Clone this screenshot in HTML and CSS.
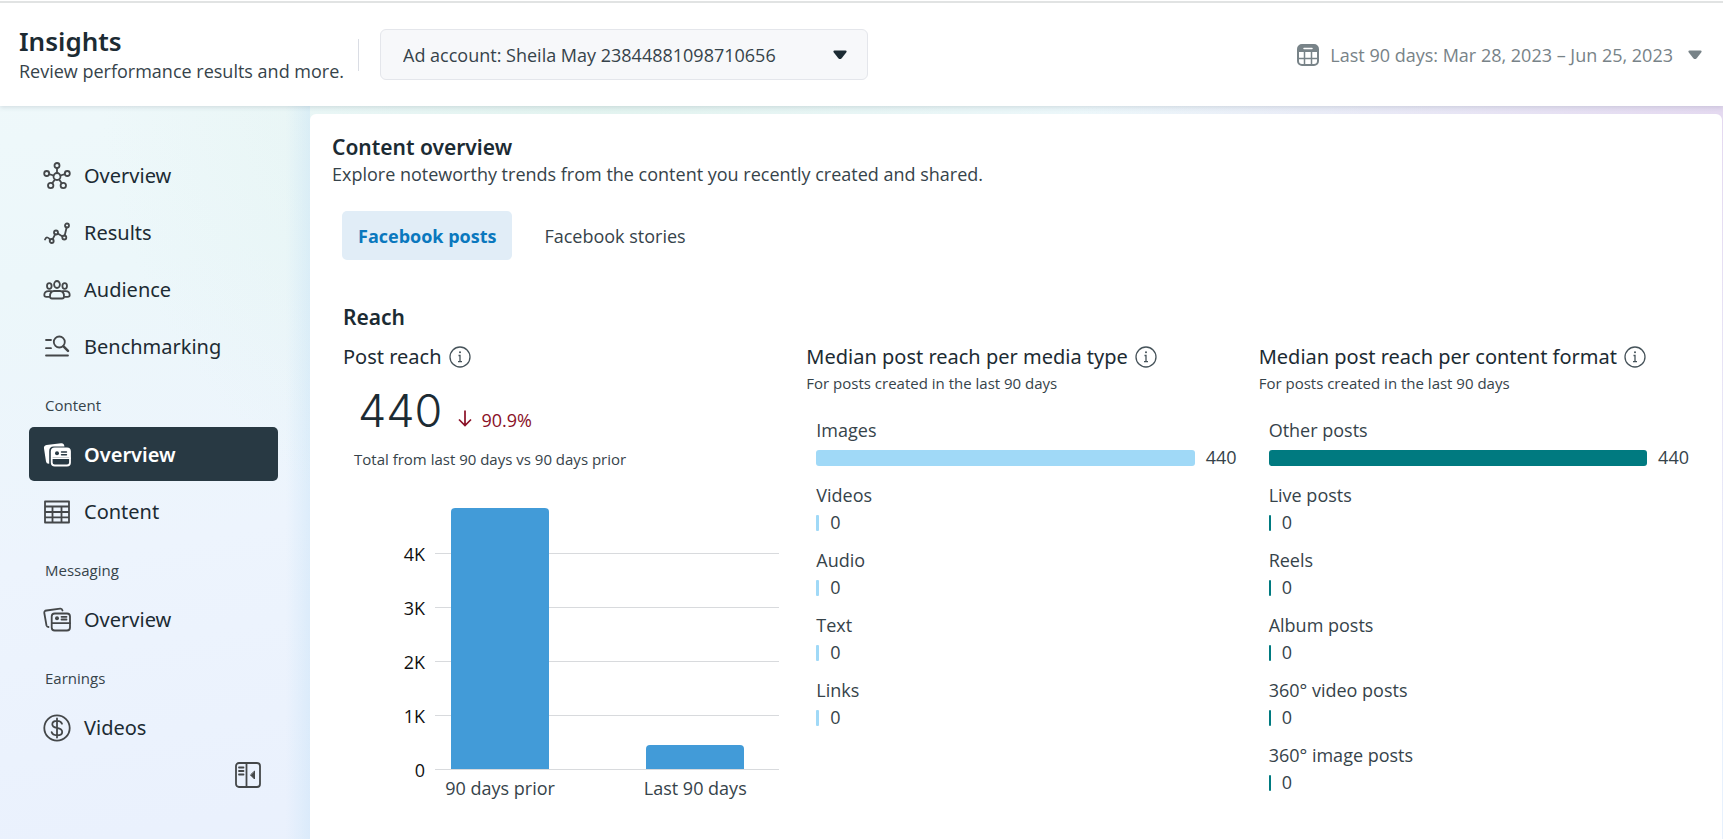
FILE: index.html
```
<!DOCTYPE html>
<html lang="en">
<head>
<meta charset="utf-8">
<meta name="viewport" content="width=device-width, initial-scale=1">
<title>Insights</title>
<link rel="stylesheet" href="styles.css">
</head>
<body>
<header class="topbar">
  <div class="brand">
    <h1 class="brand-title">Insights</h1>
    <p class="brand-text">Review performance results and more.</p>
  </div>
  <div class="account">
    <select class="account-select" aria-label="Ad account">
      <option>Ad account: Sheila May 23844881098710656</option>
    </select>
    <svg class="account-caret" width="14" height="10" viewBox="0 0 14 10"><path d="M1.500 .5h11q1.800 .3.700 2L8.700 8.200Q7 10 5.300 8.200L.8 2.500Q-.3 .8 1.500 .5z" fill="currentColor"/></svg>
  </div>
  <button class="date-range" type="button">
    <svg width="22" height="22" viewBox="0 0 22 22"><rect x="1" y="1" width="20" height="20" rx="4" fill="none" stroke="currentColor" stroke-width="2"/><path d="M1 5a4 4 0 0 1 4-4h12a4 4 0 0 1 4 4v3H1z" fill="currentColor"/><path d="M7 4.500h8" stroke="#fff" stroke-width="1.500" stroke-linecap="round"/><path d="M7.500 8v13M14.500 8v13M1 14.500h20" stroke="currentColor" stroke-width="1.500"/></svg>
    <span>Last 90 days: Mar 28, 2023 – Jun 25, 2023</span>
    <svg class="date-caret" width="14" height="10" viewBox="0 0 14 10"><path d="M1.500 .5h11q1.800 .3.700 2L8.700 8.200Q7 10 5.300 8.200L.8 2.500Q-.3 .8 1.500 .5z" fill="currentColor"/></svg>
  </button>
</header>

<div class="layout">
  <nav class="sidebar" aria-label="Insights sections">
    <a class="nav-item" href="#overview">
      <svg class="nav-icon" viewBox="0 0 28 28"><circle cx="14" cy="14.500" r="3.500"/><circle cx="14" cy="3.500" r="2.500"/><circle cx="3.700" cy="11.500" r="2.500"/><circle cx="24.300" cy="11.500" r="2.500"/><circle cx="7.700" cy="23.500" r="2.700"/><circle cx="20.300" cy="23.500" r="2.700"/><path d="M14 6v5M6.100 12.200l4.500 1.300M21.900 12.200l-4.500 1.300M9.200 21.300l2.700-3.800M18.800 21.300l-2.700-3.800"/></svg>
      <span>Overview</span>
    </a>
    <a class="nav-item" href="#results">
      <svg class="nav-icon" viewBox="0 0 28 28"><circle cx="8.700" cy="22" r="2"/><circle cx="13" cy="13.500" r="2"/><circle cx="21.300" cy="18.500" r="2"/><circle cx="24" cy="6.500" r="2"/><path d="M2 20.500q1-2.500 2.500-2 1 .3 2.700 2.200M9.700 20.200l2.400-4.800M14.800 14.600l4.700 2.900M21.700 16.500l1.900-8"/></svg>
      <span>Results</span>
    </a>
    <a class="nav-item" href="#audience">
      <svg class="nav-icon" viewBox="0 0 28 28"><ellipse cx="14" cy="8.500" rx="2.900" ry="3.500"/><ellipse cx="6.300" cy="10" rx="2.300" ry="2.800"/><ellipse cx="21.700" cy="10" rx="2.300" ry="2.800"/><path d="M7 20.500q0-5.500 4-5.500h6q4 0 4 5.500 0 2-2 2H9q-2 0-2-2zM8 15.200H5.500Q1.300 15.200 1.300 19q0 1.800 2 1.800H7M20 15.200h2.500q4.200 0 4.200 3.800 0 1.800-2 1.800H21"/></svg>
      <span>Audience</span>
    </a>
    <a class="nav-item" href="#benchmarking">
      <svg class="nav-icon" viewBox="0 0 28 28"><circle cx="16.300" cy="9" r="5.500"/><path d="M20.500 13.300l4.500 4.500" stroke-width="2.500"/><path d="M3 7h5M3 15.200h5M3 22.500h22"/></svg>
      <span>Benchmarking</span>
    </a>

    <h2 class="nav-label">Content</h2>
    <a class="nav-item nav-item-active" href="#content-overview" aria-current="page">
      <svg class="nav-icon" viewBox="0 0 28 28"><path d="M21.500 5.500q-.5-3.700-3.500-3.300L3.500 4Q.5 4.500 1 7.500l2 13q.3 2.500 3.200 2.300V10q0-4.500 4.500-4.500z" fill="currentColor" stroke="none"/><rect x="8.700" y="7.500" width="18.300" height="17" rx="3"/><path d="M9 16V10.500q0-3 3-3h12q3 0 3 3V16z" fill="currentColor" stroke="none"/><path d="M9 17.200h18"/><path d="M18.500 11h5M18.500 13.700h5" stroke="#283943" stroke-width="1.400"/><circle cx="14" cy="12.200" r="2" fill="#283943" stroke="none"/></svg>
      <span>Overview</span>
    </a>
    <a class="nav-item" href="#content">
      <svg class="nav-icon" viewBox="0 0 28 28"><path d="M2 3.500h24v21H2zM2 8.500h24M2 14h24M2 19.300h24M9.500 8.500v16M18.500 8.500v16"/></svg>
      <span>Content</span>
    </a>

    <h2 class="nav-label">Messaging</h2>
    <a class="nav-item" href="#messaging-overview">
      <svg class="nav-icon" viewBox="0 0 28 28"><path d="M19.500 4.500q-.5-2-2.300-1.800L3.500 4.500Q1 4.800 1.300 7l2.200 12.500Q4 21 5.500 21"/><rect x="8.700" y="7.500" width="18.300" height="17" rx="3"/><path d="M9 17.200h18M18.500 10.800h5M18.500 13.500h5"/><circle cx="14" cy="12.200" r="2" fill="currentColor" stroke="none"/></svg>
      <span>Overview</span>
    </a>

    <h2 class="nav-label">Earnings</h2>
    <a class="nav-item" href="#videos">
      <svg class="nav-icon" viewBox="0 0 28 28"><circle cx="14" cy="14" r="12.700"/><path d="M14 4.500v19M19 9.700Q18 6.800 14 6.800q-4.700 0-4.700 3.400 0 2.800 4.700 3.700 5.200 1 5.200 4 0 3.400-5.200 3.400-4.500 0-5.400-3.200"/></svg>
      <span>Videos</span>
    </a>
    <button class="collapse" type="button" aria-label="Collapse sidebar">
      <svg class="nav-icon" viewBox="0 0 28 28"><rect x="2" y="2" width="24" height="24" rx="3"/><path d="M12.500 2v24M5 6.500h4.500M5 10h4.500M5 13.500h4.500"/><path d="M20.500 10.500v7.500L16.700 14.200z" fill="currentColor" stroke-width="1"/></svg>
    </button>
  </nav>

  <main class="card">
    <h2 class="card-title">Content overview</h2>
    <p class="card-text">Explore noteworthy trends from the content you recently created and shared.</p>

    <div class="tabs" role="tablist">
      <button class="tab tab-active" type="button" role="tab" aria-selected="true">Facebook posts</button>
      <button class="tab" type="button" role="tab" aria-selected="false">Facebook stories</button>
    </div>

    <h3 class="reach-title">Reach</h3>
    <div class="columns">
      <section class="column">
        <h4 class="column-title">Post reach
          <svg class="info" viewBox="0 0 22 22"><circle cx="11" cy="11" r="10"/><path d="M9.500 9.500H11v6M9 15.700h4"/><circle cx="11" cy="6.300" r="1" fill="currentColor" stroke="none"/></svg>
        </h4>
        <div class="total">
          <span class="total-value">440</span>
          <span class="trend"><svg width="14" height="17" viewBox="0 0 14 17"><path d="M7 .5v15M1 9.500l6 6 6-6" fill="none" stroke="currentColor" stroke-width="1.700"/></svg>90.9%</span>
        </div>
        <p class="total-text">Total from last 90 days vs 90 days prior</p>

        <div class="chart">
          <div class="axis"><span>4K</span><span>3K</span><span>2K</span><span>1K</span><span>0</span></div>
          <div class="plot">
            <div class="slot"><div class="bar" style="height:261px"></div></div>
            <div class="slot"><div class="bar" style="height:24px"></div></div>
          </div>
          <div class="ticks"><span>90 days prior</span><span>Last 90 days</span></div>
        </div>
      </section>

      <section class="column">
        <h4 class="column-title">Median post reach per media type
          <svg class="info" viewBox="0 0 22 22"><circle cx="11" cy="11" r="10"/><path d="M9.500 9.500H11v6M9 15.700h4"/><circle cx="11" cy="6.300" r="1" fill="currentColor" stroke="none"/></svg>
        </h4>
        <p class="column-text">For posts created in the last 90 days</p>
        <dl class="meters meters-media">
          <div class="meter meter-full"><dt>Images</dt><dd>440</dd></div>
          <div class="meter"><dt>Videos</dt><dd>0</dd></div>
          <div class="meter"><dt>Audio</dt><dd>0</dd></div>
          <div class="meter"><dt>Text</dt><dd>0</dd></div>
          <div class="meter"><dt>Links</dt><dd>0</dd></div>
        </dl>
      </section>

      <section class="column">
        <h4 class="column-title">Median post reach per content format
          <svg class="info" viewBox="0 0 22 22"><circle cx="11" cy="11" r="10"/><path d="M9.500 9.500H11v6M9 15.700h4"/><circle cx="11" cy="6.300" r="1" fill="currentColor" stroke="none"/></svg>
        </h4>
        <p class="column-text">For posts created in the last 90 days</p>
        <dl class="meters meters-format">
          <div class="meter meter-full"><dt>Other posts</dt><dd>440</dd></div>
          <div class="meter"><dt>Live posts</dt><dd>0</dd></div>
          <div class="meter"><dt>Reels</dt><dd>0</dd></div>
          <div class="meter"><dt>Album posts</dt><dd>0</dd></div>
          <div class="meter"><dt>360° video posts</dt><dd>0</dd></div>
          <div class="meter"><dt>360° image posts</dt><dd>0</dd></div>
        </dl>
      </section>
    </div>
  </main>
</div>
</body>
</html>
```
FILE: styles.css
```
* {
  box-sizing: border-box;
}

body,
h1, h2, h3, h4,
p, dl, dt, dd {
  margin: 0;
}

body {
  min-height: 100vh;
  display: flex;
  flex-direction: column;
  font: 400 18px/24px "Open Sans", "Noto Sans", sans-serif;
  color: #36434a;
  background:
    radial-gradient(circle at 100% 106px, rgba(228, 217, 240, 1) 0, rgba(228, 220, 240, 0) 640px),
    radial-gradient(circle at 600px 80px, rgba(226, 243, 239, 1) 0, rgba(232, 246, 244, 0) 500px),
    linear-gradient(170deg, #f0f9fa 0, #ecf7fa 25%, #edf4fd 50%, #eaf1fd 75%, #e7f1fd 100%);
}

button, select {
  font: inherit;
  color: inherit;
  border: 0;
  background: none;
  padding: 0;
  cursor: pointer;
}

h1, h2, h3, h4 {
  color: #1c2b33;
}

/* Top bar */
.topbar {
  position: relative;
  z-index: 1;
  display: flex;
  align-items: center;
  height: 106px;
  padding: 3px 21px 0 19px;
  background: linear-gradient(#fff 1px, #e1e3e3 1px, #e1e3e3 3px, #fff 3px);
  box-shadow: 0 1px 5px rgba(60, 80, 100, 0.18);
}

.brand {
  display: grid;
  gap: 2px;
  padding-right: 14px;
  white-space: nowrap;
}

.brand-title {
  font: 600 26px/30px "Noto Sans", sans-serif;
}

.brand-text {
  line-height: 26px;
}

.account {
  position: relative;
  display: flex;
  align-items: center;
  gap: 21px;
}

.account::before {
  content: "";
  width: 1px;
  height: 32px;
  background: #dadde4;
}

.account-select {
  appearance: none;
  width: 488px;
  height: 51px;
  padding: 0 60px 0 22px;
  border: 1px solid #e4e6eb;
  border-radius: 6px;
  background: #f7f8fa;
}

.account-caret {
  position: absolute;
  right: 21px;
  color: #1c2b33;
}

.date-range {
  display: flex;
  align-items: center;
  gap: 11px;
  margin-left: auto;
  color: #788388;
  white-space: nowrap;
}

.date-caret {
  margin-left: 4px;
}

.layout {
  flex: 1;
  display: grid;
  grid-template-columns: 310px minmax(0, 1fr);
}

/* Sidebar */
.sidebar {
  display: flex;
  flex-direction: column;
  gap: 3px;
  padding: 42px 32px 30px 29px;
  background: linear-gradient(to left, rgba(190, 222, 246, 0.35), rgba(190, 222, 246, 0) 24px);
}

.nav-item {
  display: flex;
  align-items: center;
  gap: 13px;
  height: 54px;
  padding: 2px 14px 0;
  border-radius: 5px;
  font: 400 20px/26px "Noto Sans", sans-serif;
  color: #1c2b33;
  text-decoration: none;
}

.nav-item-active {
  background: #283943;
  color: #fff;
  font-weight: 600;
}

.nav-item-active .nav-icon {
  color: #fff;
}

.nav-icon {
  flex: none;
  width: 28px;
  height: 28px;
  fill: none;
  stroke: currentColor;
  stroke-width: 1.8;
  stroke-linecap: round;
  stroke-linejoin: round;
  color: #444749;
}

.nav-label {
  height: 48px;
  padding: 17px 16px 0;
  font-size: 15px;
  font-weight: 400;
  line-height: 24px;
  color: #36434a;
}

.collapse {
  align-self: flex-end;
  display: flex;
  margin: 4px 16px 0 0;
}

/* Content card */
.card {
  margin: 8px 1px 0 0;
  padding: 20px 11px 20px 22px;
  border-radius: 6px 6px 0 0;
  background: #fff;
}

.card-title,
.reach-title {
  font: 600 21px/26px "Noto Sans", sans-serif;
}

.card-text {
  padding-top: 2px;
}

.tabs {
  display: flex;
  gap: 16px;
  padding: 25px 10px 0;
}

.tab {
  height: 49px;
  padding: 0 16px;
  border-radius: 5px;
}

.tab-active {
  background: #e1edf7;
  color: #0a78be;
  font-weight: 700;
}

.reach-title {
  padding: 44px 11px 0;
}

.columns {
  display: grid;
  grid-template-columns: 463fr 452fr 452fr;
  padding: 14px 0 0 11px;
}

.column-title {
  display: flex;
  align-items: center;
  gap: 7px;
  font: 400 20px/26px "Noto Sans", sans-serif;
}

.info {
  flex: none;
  width: 22px;
  height: 22px;
  fill: none;
  stroke: #46535a;
  stroke-width: 1.3;
  color: #46535a;
}

.column-text {
  font-size: 15px;
  line-height: 26px;
}

.total {
  display: flex;
  align-items: baseline;
  gap: 16px;
  padding: 15px 0 0 15px;
}

.total-value {
  font: 300 45px/52px Inter, sans-serif;
  color: #1c2b33;
}

.trend {
  display: flex;
  align-items: baseline;
  gap: 9px;
  color: #8a1026;
}

.total-text {
  padding: 10px 0 0 11px;
  font-size: 15px;
}

/* Vertical bar chart */
.chart {
  display: grid;
  grid-template-columns: 82px 1fr;
  column-gap: 10px;
  padding: 37px 27px 0 0;
}

.axis {
  display: flex;
  flex-direction: column;
  justify-content: flex-end;
  margin-bottom: -27px;
  line-height: 54px;
  color: #111;
  text-align: right;
}

.plot,
.ticks {
  display: grid;
  grid-template-columns: 1fr 1fr;
  gap: 65px;
  padding-right: 19px;
}

.plot {
  height: 262px;
  border-bottom: 1px solid #d8dadd;
  background: repeating-linear-gradient(to top, transparent 0, transparent 53px, #d8dadd 53px, #d8dadd 54px);
}

.slot {
  display: flex;
  align-items: flex-end;
  justify-content: center;
}

.bar {
  width: 98px;
  border-radius: 4px 4px 0 0;
  background: #429bd8;
}

.ticks {
  grid-column: 2;
  padding-top: 6px;
  text-align: center;
  white-space: nowrap;
}

/* Horizontal meters */
.meters {
  display: grid;
  gap: 11px;
  padding: 21px 22px 0 10px;
}

.meter dt {
  line-height: 27px;
}

.meter dd {
  display: flex;
  align-items: center;
  gap: 11px;
  line-height: 27px;
}

.meter dd::before {
  content: "";
  width: 3px;
  height: 16px;
  border-radius: 1px;
  background: #a0d9f7;
}

.meters-format .meter dd::before {
  width: 2px;
  background: #007a80;
}

.meters .meter-full dd::before {
  flex: 1;
  border-radius: 3px;
}
```
